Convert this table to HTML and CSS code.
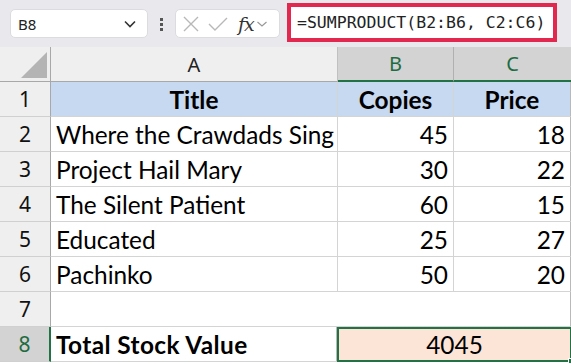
FILE: index.html
```html
<!DOCTYPE html>
<html>
<head>
<meta charset="utf-8">
<link rel="stylesheet" href="styles.css">
</head>
<body>
<div class="toolbar">
  <div class="namebox"><span>B8</span>
    <svg class="chev" width="14" height="10" viewBox="0 0 14 10"><path d="M2 2.5 L7 7.5 L12 2.5" fill="none" stroke="#333" stroke-width="1.6"/></svg>
  </div>
  <div class="dots"><i></i><i></i><i></i></div>
  <div class="fxbox">
    <svg width="20" height="20" viewBox="0 0 20 20"><path d="M3 3 L17 17 M17 3 L3 17" stroke="#b8b8b8" stroke-width="1.4" fill="none"/></svg>
    <svg width="22" height="20" viewBox="0 0 22 20"><path d="M2 10 L8 16 L20 4" stroke="#b8b8b8" stroke-width="1.4" fill="none"/></svg>
    <span class="fx">fx</span>
    <svg width="12" height="8" viewBox="0 0 12 8"><path d="M1.5 2 L6 6 L10.5 2" fill="none" stroke="#999" stroke-width="1.2"/></svg>
  </div>
  <div class="formula"><div class="ftext">=SUMPRODUCT(B2:B6, C2:C6)</div></div>
</div>
<div class="sheet">
  <div class="corner"><div class="tri"></div></div>
  <div class="ch">A</div>
  <div class="ch sel">B</div>
  <div class="ch sel">C</div>

  <div class="rh">1</div>
  <div class="c hd">Title</div>
  <div class="c hd">Copies</div>
  <div class="c hd">Price</div>

  <div class="rh">2</div>
  <div class="c">Where the Crawdads Sing</div>
  <div class="c n">45</div>
  <div class="c n">18</div>

  <div class="rh">3</div>
  <div class="c">Project Hail Mary</div>
  <div class="c n">30</div>
  <div class="c n">22</div>

  <div class="rh">4</div>
  <div class="c">The Silent Patient</div>
  <div class="c n">60</div>
  <div class="c n">15</div>

  <div class="rh">5</div>
  <div class="c">Educated</div>
  <div class="c n">25</div>
  <div class="c n">27</div>

  <div class="rh">6</div>
  <div class="c">Pachinko</div>
  <div class="c n">50</div>
  <div class="c n">20</div>

  <div class="rh">7</div>
  <div class="c span3"></div>

  <div class="rh selrow">8</div>
  <div class="c b">Total Stock Value</div>
  <div class="c total span2">4045<span class="handle"></span></div>
</div>
</body>
</html>
```
FILE: styles.css
```css
* { box-sizing: border-box; }
html, body { margin: 0; padding: 0; background: #fff; }
body { width: 571px; height: 364px; overflow: hidden; font-family: Lato, "Open Sans", sans-serif; }

.toolbar {
  height: 47px;
  background: #e9e9ed;
  display: flex;
  align-items: flex-start;
  padding-top: 9px;
}
.namebox {
  flex: none;
  margin-left: 10px;
  width: 138px;
  height: 29px;
  background: #fff;
  border: 1px solid #dcdce0;
  border-radius: 5px;
  display: flex;
  align-items: center;
  justify-content: space-between;
  padding: 0 10px 0 7px;
  font-family: "Noto Sans", sans-serif;
  font-size: 15px;
  color: #222;
}
.dots {
  flex: none;
  width: 27px;
  display: flex;
  flex-direction: column;
  align-items: center;
  gap: 2px;
  padding-top: 9px;
}
.dots i { display: block; width: 3px; height: 3px; background: #555; }
.fxbox {
  flex: none;
  width: 105px;
  height: 29px;
  background: #fff;
  border: 1px solid #dcdce0;
  border-radius: 5px;
  display: flex;
  align-items: center;
  padding: 0 3px 0 5px;
  gap: 2px;
}
.fxbox svg:nth-child(2) { margin-left: 4px; }
.fx {
  font-family: "DejaVu Serif", serif;
  font-style: italic;
  font-size: 19px;
  color: #333;
  margin-left: 7px;
  letter-spacing: -1px;
}
.formula {
  flex: none;
  margin-left: 7px;
  margin-top: -6px;
  width: 270px;
  height: 39px;
  border: 4px solid #e2284f;
  background: #fff;
  display: flex;
  align-items: center;
  padding-left: 6px;
  overflow: hidden;
}
.ftext {
  font-family: "DejaVu Sans Mono", "Liberation Mono", monospace;
  font-size: 16.5px;
  color: #222;
  white-space: nowrap;
}

.sheet {
  display: grid;
  grid-template-columns: 51px 287px 116px 118px;
  grid-auto-rows: 35px;
}
.sheet > div {
  border-right: 1px solid #d4d4d4;
  border-bottom: 1px solid #d4d4d4;
}
.corner {
  background: #efefef;
  border-right: 1px solid #a8a8a8 !important;
  border-bottom: 1px solid #a8a8a8 !important;
  position: relative;
}
.tri {
  position: absolute;
  right: 3px;
  bottom: 3px;
  width: 0; height: 0;
  border-left: 26px solid transparent;
  border-bottom: 26px solid #b4b4b4;
}
.ch {
  background: #efefef;
  border-right: 1px solid #c0c0c0 !important;
  border-bottom: 1px solid #a8a8a8 !important;
  display: flex; align-items: center; justify-content: center;
  font-family: "Noto Sans", sans-serif;
  font-size: 20px;
  color: #222;
}
.ch.sel {
  background: #d3d3d3;
  color: #1e6c41;
  border-bottom: 2px solid #217346 !important;
  border-right: 1px solid #b0b0b0 !important;
}
.ch:last-child, .sheet > div:nth-child(4n) { border-right: 2px solid #b9b9b9; }
.rh {
  background: #efefef;
  border-right: 1px solid #a8a8a8 !important;
  border-bottom: 1px solid #d0d0d0 !important;
  display: flex; align-items: center; justify-content: center;
  font-family: "Noto Sans", sans-serif;
  font-size: 21px;
  color: #111;
}
.rh.selrow {
  background: #d3d3d3;
  color: #1e6c41;
  border-right: 2px solid #217346 !important;
}
.c {
  display: flex; align-items: center;
  padding: 0 5px;
  font-size: 24.4px;
  color: #000;
  white-space: nowrap;
}
.c.hd { background: #c6d9f0; font-weight: bold; justify-content: center; }
.c.n { justify-content: flex-end; padding-right: 5px; }
.c.b { font-weight: bold; letter-spacing: 0.4px; }
.span3 { grid-column: span 3; border-right: 2px solid #b9b9b9 !important; }
.span2 { grid-column: span 2; }
.c.total {
  background: #fce4d6;
  border: 2px solid #217346 !important;
  justify-content: center;
  position: relative;
  margin-left: -1px;
}
.handle {
  position: absolute;
  right: -4px; bottom: -4px;
  width: 6px; height: 6px;
  background: #217346;
  border: 1px solid #fff;
}
```
